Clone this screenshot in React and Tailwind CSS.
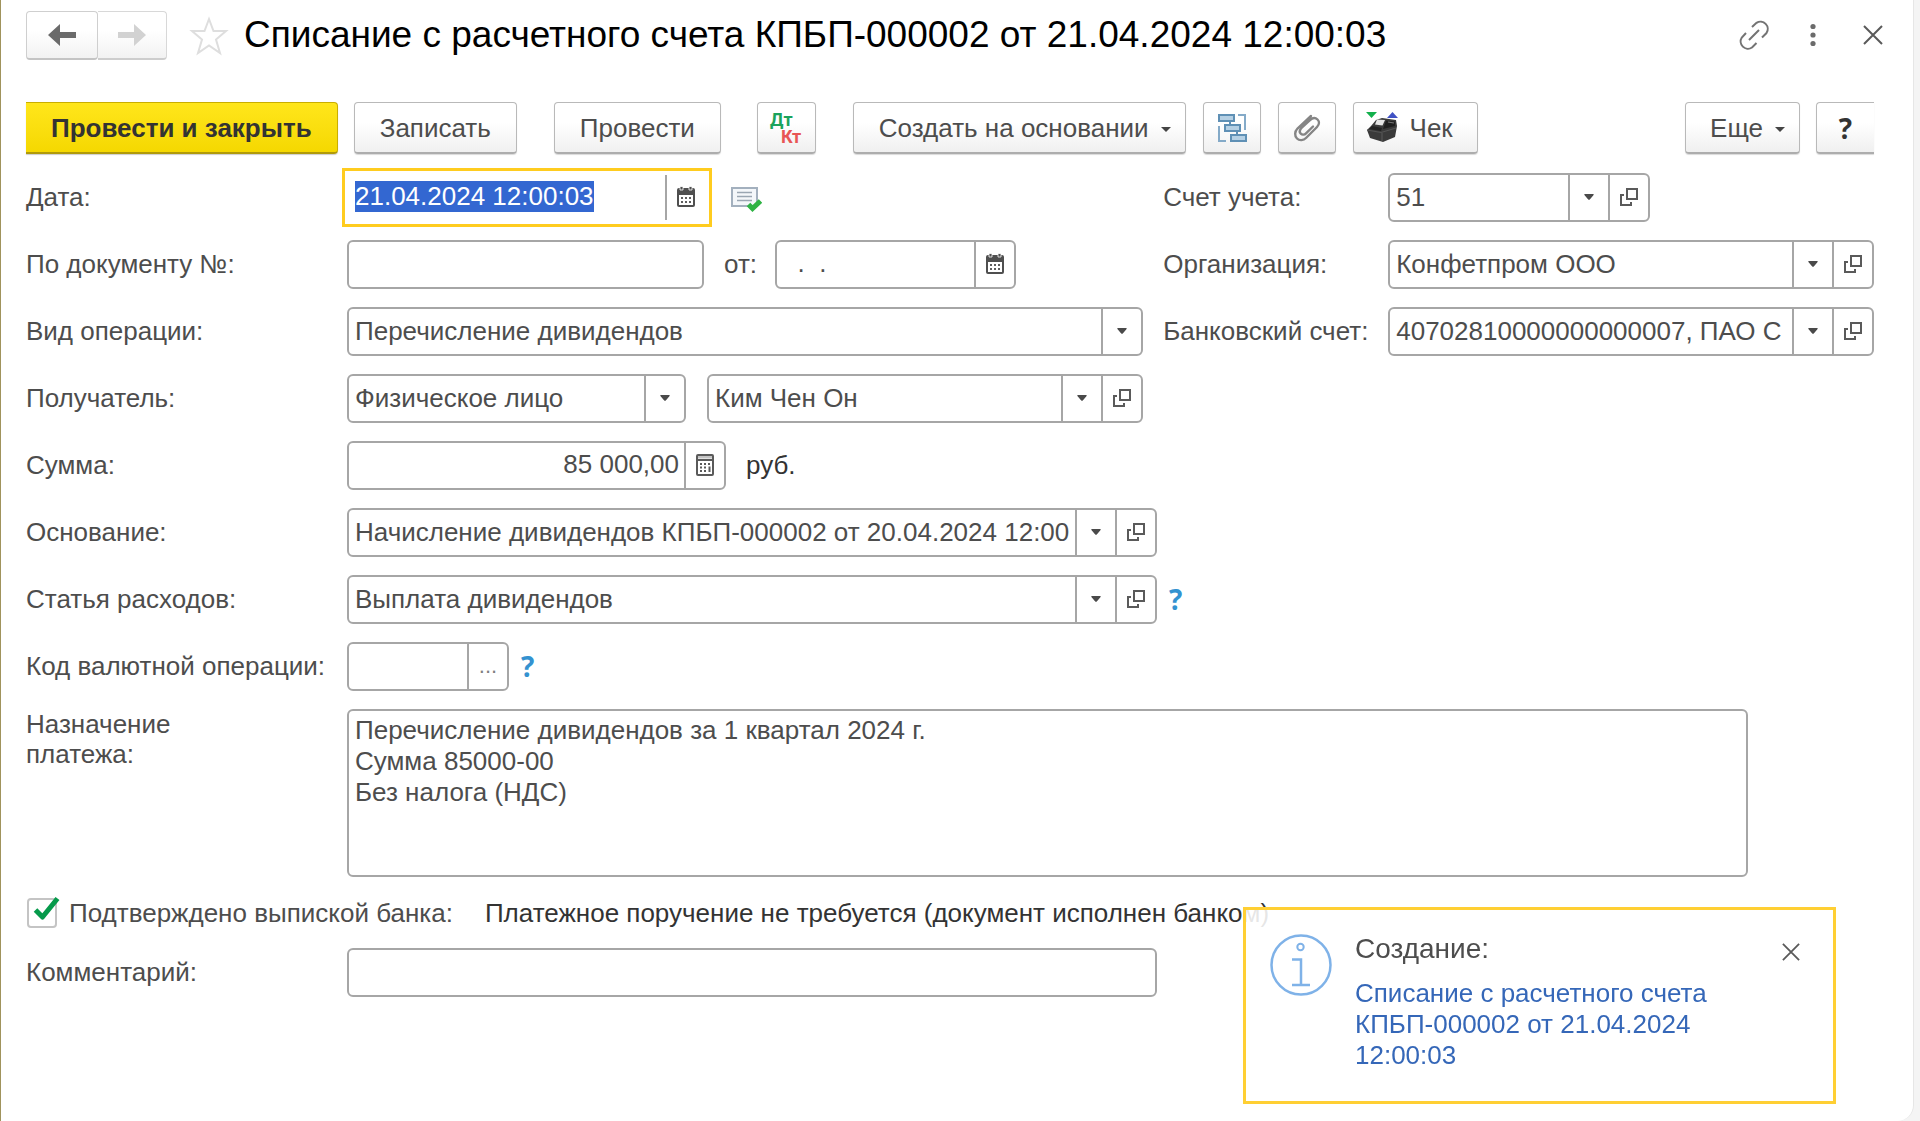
import { useEffect, useRef, useState } from 'react'

const buttonClass = "h-[52px] shrink-0 flex items-center justify-center rounded-[4px] border border-[#b9b9b9] border-b-2 border-b-[#adadad] bg-linear-to-b from-white from-40% to-[#f0f0f0] text-[#4d4d4d] shadow-[0_1px_1px_rgba(0,0,0,0.15)]"
const fieldClass = "relative flex h-[49px] rounded-[6px] border-2 border-[#a6a6a6] bg-white overflow-hidden"
const inputClass = "min-w-0 flex-1 h-full pl-[6px] pr-[5px] pb-[2px] bg-transparent outline-none appearance-none"
const sideClass = "w-10 h-full shrink-0 flex items-center justify-center pb-[2px] border-l-2 border-[#a6a6a6]"
const labelClass = "w-[321px] shrink-0 pb-[2px] whitespace-nowrap"

function Caret() {
  return (
    <svg width="10" height="6" viewBox="0 0 10 6" aria-hidden="true">
      <path d="M0.6 0H9.4Q10 0.6 9.4 1.2L5.8 5.5Q5 6.2 4.2 5.5L0.6 1.2Q0 0.6 0.6 0Z" fill="#4a4a4a" />
    </svg>
  )
}

function MenuCaret() {
  return (
    <svg className="mt-1" width="10" height="5" viewBox="0 0 10 5" aria-hidden="true">
      <path d="M0 0H10L5 5Z" fill="#444" />
    </svg>
  )
}

function OpenIcon() {
  return (
    <svg width="20" height="20" viewBox="0 0 20 20" fill="none" stroke="#5a5a5a" strokeWidth="2" aria-hidden="true">
      <rect x="8" y="2" width="10" height="10" />
      <path d="M5 8H2V18H12V15" />
    </svg>
  )
}

function CalendarIcon() {
  return (
    <svg width="20" height="22" viewBox="0 0 20 22" aria-hidden="true">
      <path d="M1 4Q1 2 3 2H17Q19 2 19 4V19Q19 21 17 21H3Q1 21 1 19Z" fill="#4f4f4f" />
      <rect x="3" y="9" width="14" height="10" fill="#fff" />
      <path d="M4 0.5H7V4H4ZM13 0.5H16V4H13Z" fill="#4f4f4f" stroke="#fff" strokeWidth="0.8" />
      <path d="M5 12H7M9 12H11M13 12H15M5 16H7M9 16H11M13 16H15" stroke="#5f5f5f" strokeWidth="2" />
    </svg>
  )
}

function CalculatorIcon() {
  return (
    <svg width="20" height="24" viewBox="0 0 20 24" fill="none" aria-hidden="true">
      <rect x="2" y="2" width="16" height="20" rx="1" stroke="#5a5a5a" strokeWidth="2" />
      <rect x="3" y="3" width="14" height="2.5" fill="#c4c4c4" />
      <path d="M2 7H18" stroke="#5a5a5a" strokeWidth="2" />
      <path d="M5 11H7M9 11H11M13 11H15M5 14.5H7M9 14.5H11M5 18H7M9 18H11" stroke="#5a5a5a" strokeWidth="2" />
      <path d="M14.5 13.5V19" stroke="#5a5a5a" strokeWidth="2" />
    </svg>
  )
}

function CloseIcon({ size }) {
  return (
    <svg width={size} height={size} viewBox="0 0 20 20" stroke="#5a5a5a" strokeWidth="2" aria-hidden="true">
      <path d="M1 1L19 19M19 1L1 19" />
    </svg>
  )
}

function StructureIcon() {
  return (
    <svg width="30" height="30" viewBox="0 0 30 30" fill="none" stroke="#5f90b5" strokeWidth="2" aria-hidden="true">
      <path d="M13 8V12M20 18V22" />
      <rect x="2" y="2" width="15" height="6" fill="#b5d0e4" />
      <rect x="8" y="12" width="15" height="6" fill="#b5d0e4" />
      <rect x="14" y="22" width="15" height="6" fill="#b5d0e4" />
      <path d="M21 2H28V17M2 13V28H9" stroke="#84aac8" />
    </svg>
  )
}

function ClipIcon() {
  return (
    <svg width="28" height="28" viewBox="0 0 28 28" fill="none" stroke="#858585" strokeWidth="2.4" strokeLinecap="round" aria-hidden="true">
      <path d="M18 2L4.500 14.500C1.500 17.500 1.500 22 4 24.500C6.500 27 10.500 26.500 13 24L24 13C26.500 10.500 26.500 7.500 24.500 5.500C22.500 3.500 19.500 3.700 17 6L8.500 14C6.500 16 6.300 18.200 7.800 19.700C9.300 21.200 11.500 20.800 13 19.300L20 12.500" />
    </svg>
  )
}

function CashRegisterIcon() {
  return (
    <svg width="32" height="31" viewBox="0 0 32 31" aria-hidden="true">
      <path d="M0 0H11L5.500 6Z" fill="#12b04c" />
      <path d="M21 6H32L26.500 0Z" fill="#4052c4" />
      <path d="M10 8L16 6L30 8L31 14L29 25L17 30L4 26L1 18L5 14Z" fill="#3a3a3a" />
      <path d="M11 7.500L19 8L16.500 13.500L9 12.500Z" fill="#e4e4e4" />
      <path d="M1 18L15 20.500L30 16" stroke="#555" strokeWidth="1" fill="none" />
      <path d="M17 17L20 8.500L29 9.500L29 14Z" fill="#1f1f1f" />
      <path d="M6 14L16 16L15 19L3 17Z" fill="#222" />
      <path d="M16 21V29" stroke="#5a5a5a" strokeWidth="1" />
      <path d="M22 10L28 11" stroke="#777" strokeWidth="1.200" />
    </svg>
  )
}

function PostedIcon() {
  return (
    <svg width="31" height="25" viewBox="0 0 31 25" fill="none" aria-hidden="true">
      <rect x="1" y="1" width="25" height="18" fill="#f4f7fa" stroke="#a3b0be" strokeWidth="2" />
      <path d="M6 5.500H21M6 9.500H21M6 13.500H21" stroke="#9aa6b2" strokeWidth="1.600" />
      <path d="M17.500 17.500L21.500 21.500L29.500 14" stroke="#2fb344" strokeWidth="5" />
    </svg>
  )
}

function SelectField({ id, value, width, open }) {
  return (
    <div className={`${fieldClass} ${width}`}>
      <div className="relative flex min-w-0 flex-1">
        <select id={id} defaultValue={value} className={`${inputClass} mr-10`}>
          <option>{value}</option>
        </select>
        <span className={`${sideClass} absolute right-0 top-0 pointer-events-none`}><Caret /></span>
      </div>
      {open && <button type="button" aria-label="Открыть" className={sideClass}><OpenIcon /></button>}
    </div>
  )
}

function Row({ id, label, children }) {
  return (
    <div className="flex items-center h-[49px]">
      <label htmlFor={id} className={labelClass}>{label}</label>
      {children}
    </div>
  )
}

function Help() {
  return <button type="button" aria-label="Справка" className="ml-3 pb-[2px] font-['Open_Sans'] font-bold text-[28px] leading-[30px] text-[#3492d0]">?</button>
}

export default function App() {
  const dateRef = useRef(null)
  const [confirmed, setConfirmed] = useState(true)
  const [toast, setToast] = useState(true)

  useEffect(() => {
    dateRef.current.focus()
    dateRef.current.select()
  }, [])

  return (
    <div className="min-h-screen flex bg-[#f4f4f4] font-['Liberation_Sans',Arial,sans-serif] text-[26px] leading-[30px] text-[#4d4d4d]">
      <main className="flex-1 min-w-0 mr-[6px] pt-[11px] pl-[25px] pr-[39px] bg-white border-l border-l-[#a0935c] border-r border-r-[#e6e6e6] rounded-br-2xl">
        {/* Title bar */}
        <header className="flex items-center h-[49px]">
          <div className="flex h-full">
            <button type="button" aria-label="Назад" className="w-[72px] flex items-center justify-center rounded-[4px] border border-[#cfcfcf] border-b-2 border-b-[#c4c4c4] bg-linear-to-b from-white from-40% to-[#f2f2f2]">
              <svg width="28" height="22" viewBox="0 0 28 22" fill="#6b6b6b"><path d="M0 11L12 0V8H28V14H12V22Z" /></svg>
            </button>
            <button type="button" aria-label="Вперед" className="w-[69px] flex items-center justify-center rounded-r-[4px] border border-l-0 border-[#d8d8d8] border-b-2 border-b-[#cdcdcd] bg-linear-to-b from-white from-40% to-[#f2f2f2]">
              <svg width="28" height="22" viewBox="0 0 28 22" fill="#d2d2d2"><path d="M28 11L16 0V8H0V14H16V22Z" /></svg>
            </button>
          </div>
          <button type="button" aria-label="В избранное" className="ml-[22px]">
            <svg width="40" height="40" viewBox="0 0 40 40" fill="none" stroke="#dedede" strokeWidth="2"><path d="M20 3L24.500 15H37L27 23.500L31 37L20 29.500L9 37L13 23.500L3 15H15.500Z" /></svg>
          </button>
          <h1 className="ml-[15px] pb-px text-[37px] leading-[42px] text-black whitespace-nowrap">Списание с расчетного счета КПБП-000002 от 21.04.2024 12:00:03</h1>
          <div className="ml-auto -mr-[9px] pb-[2px] flex items-center">
            <button type="button" aria-label="Ссылка">
              <svg width="32" height="32" viewBox="0 0 32 32" fill="none" stroke="#737373" strokeWidth="2">
                <path d="M14 8L18.500 3.800A7.300 7.300 0 0 1 28.500 14L24 18.500M8 14L3.800 18.500A7.300 7.300 0 0 0 14 28.500L18.500 24M11 21L21 11" />
              </svg>
            </button>
            <button type="button" aria-label="Меню" className="ml-10">
              <svg width="6" height="24" viewBox="0 0 6 24" fill="#6b6b6b"><circle cx="3" cy="3.500" r="2.600" /><circle cx="3" cy="12" r="2.600" /><circle cx="3" cy="20.500" r="2.600" /></svg>
            </button>
            <button type="button" aria-label="Закрыть" className="ml-[47px]"><CloseIcon size={20} /></button>
          </div>
        </header>

        {/* Commands */}
        <div className="flex mt-[42px]">
          <button type="button" className="h-[52px] shrink-0 px-[25px] rounded-r-[4px] border border-[#c9ae00] border-l-0 border-b-2 border-b-[#b09a0a] bg-linear-to-b from-[#ffe61a] to-[#f5d800] font-bold text-[#333] shadow-[0_1px_1px_rgba(0,0,0,0.2)]">Провести и закрыть</button>
          <button type="button" className={`${buttonClass} ml-4 px-[25px]`}>Записать</button>
          <button type="button" className={`${buttonClass} ml-[37px] px-[25px]`}>Провести</button>
          <button type="button" aria-label="Дт Кт" className={`${buttonClass} ml-9 w-[59px]`}>
            <svg width="40" height="42" viewBox="0 0 40 42" fontFamily="Roboto" fontWeight="700" fontSize="18">
              <text x="4" y="19" fill="#1ba35c">Дт</text>
              <text x="15" y="36" fill="#e85555">Кт</text>
            </svg>
          </button>
          <button type="button" className={`${buttonClass} ml-[37px] pl-[25px] pr-[14px] gap-3`}>Создать на основании <MenuCaret /></button>
          <button type="button" aria-label="Структура подчиненности" className={`${buttonClass} ml-[17px] w-[58px]`}><StructureIcon /></button>
          <button type="button" aria-label="Файлы" className={`${buttonClass} ml-[17px] w-[58px]`}><ClipIcon /></button>
          <button type="button" className={`${buttonClass} ml-[17px] pl-3 pr-6 gap-3`}><CashRegisterIcon />Чек</button>
          <button type="button" className={`${buttonClass} ml-auto pl-6 pr-[14px] gap-3`}>Еще <MenuCaret /></button>
          <button type="button" aria-label="Справка" className={`${buttonClass} ml-4 w-[58px] rounded-r-none border-r-0 font-['Open_Sans'] font-bold text-[28px] text-[#333]`}>?</button>
        </div>

        <form className="mt-[19px] flex flex-col gap-[18px]" onSubmit={(e) => e.preventDefault()}>
          <div className="grid grid-cols-[8fr_5fr]">
            <div className="min-w-0 flex flex-col gap-[18px] pr-5">
              <Row id="date" label="Дата:">
                <div className="flex w-[360px] h-[49px] border-2 border-transparent outline-3 outline-offset-2 outline-[#ffcc1f]">
                  <input id="date" ref={dateRef} defaultValue="21.04.2024 12:00:03" className={`${inputClass} selection:bg-[#3367d1] selection:text-white`} />
                  <button type="button" aria-label="Выбрать дату" className={sideClass}><CalendarIcon /></button>
                </div>
                <span className="ml-6 pt-1"><PostedIcon /></span>
              </Row>
              <Row id="doc" label="По документу №:">
                <div className={`${fieldClass} w-[357px]`}><input id="doc" className={inputClass} /></div>
                <label htmlFor="docdate" className="ml-5 mr-[18px] pb-[2px]">от:</label>
                <div className={`${fieldClass} w-[241px]`}>
                  <input id="docdate" defaultValue="  .  ." className={`${inputClass} whitespace-pre`} />
                  <button type="button" aria-label="Выбрать дату" className={sideClass}><CalendarIcon /></button>
                </div>
              </Row>
              <Row id="kind" label="Вид операции:">
                <SelectField id="kind" value="Перечисление дивидендов" width="flex-1" />
              </Row>
              <Row id="payee" label="Получатель:">
                <SelectField id="payee" value="Физическое лицо" width="w-[339px]" />
                <div className="flex flex-1 ml-[21px]">
                  <SelectField id="person" value="Ким Чен Он" width="flex-1" open />
                </div>
              </Row>
            </div>

            <div className="min-w-0 flex flex-col gap-[18px]">
              <div className="flex items-center">
                <label htmlFor="account" className="w-[225px] shrink-0 pb-[2px]">Счет учета:</label>
                <SelectField id="account" value="51" width="w-[262px]" open />
              </div>
              <div className="flex items-center">
                <label htmlFor="org" className="w-[225px] shrink-0 pb-[2px]">Организация:</label>
                <SelectField id="org" value="Конфетпром ООО" width="flex-1 min-w-0" open />
              </div>
              <div className="flex items-center">
                <label htmlFor="bank" className="w-[225px] shrink-0 pb-[2px]">Банковский счет:</label>
                <SelectField id="bank" value="40702810000000000007, ПАО С" width="flex-1 min-w-0" open />
              </div>
            </div>
          </div>

          <Row id="sum" label="Сумма:">
            <div className={`${fieldClass} w-[379px]`}>
              <input id="sum" defaultValue="85 000,00" className={`${inputClass} text-right`} />
              <button type="button" aria-label="Калькулятор" className={sideClass}><CalculatorIcon /></button>
            </div>
            <span className="ml-5 pb-[2px] text-[#333]">руб.</span>
          </Row>
          <Row id="basis" label="Основание:">
            <SelectField id="basis" value="Начисление дивидендов КПБП-000002 от 20.04.2024 12:00:00" width="w-[810px]" open />
          </Row>
          <Row id="item" label="Статья расходов:">
            <SelectField id="item" value="Выплата дивидендов" width="w-[810px]" open />
            <Help />
          </Row>
          <Row id="code" label="Код валютной операции:">
            <div className={`${fieldClass} w-[162px]`}>
              <input id="code" className={inputClass} />
              <button type="button" aria-label="Выбрать" className={`${sideClass} text-[22px] text-[#808080]`}>...</button>
            </div>
            <Help />
          </Row>

          <div className="flex items-start pr-[126px]">
            <label htmlFor="purpose" className="w-[321px] shrink-0">Назначение<br />платежа:</label>
            <textarea id="purpose" className="block flex-1 h-[168px] pt-1 px-[6px] rounded-[6px] border-2 border-[#a6a6a6] leading-[31px] outline-none resize-none"
              defaultValue={'Перечисление дивидендов за 1 квартал 2024 г.\nСумма 85000-00\nБез налога (НДС)'} />
          </div>

          <div className="flex items-center h-[35px] pl-px">
            <label className="flex items-center gap-3 whitespace-nowrap">
              <span className="relative flex">
                <input type="checkbox" checked={confirmed} onChange={(e) => setConfirmed(e.target.checked)} className="appearance-none size-[30px] rounded-[4px] border-2 border-[#c4c4c4] bg-white" />
                {confirmed && (
                  <svg className="absolute left-[6px] -top-[2px] pointer-events-none" width="27" height="26" viewBox="0 0 27 26" fill="none" stroke="#069a4b" strokeWidth="5">
                    <path d="M2.500 14L9.500 21L24.500 2.500" strokeLinejoin="round" />
                  </svg>
                )}
              </span>
              Подтверждено выпиской банка:
            </label>
            <span className="ml-8 text-[#333] whitespace-nowrap">Платежное поручение не требуется (документ исполнен банком)</span>
          </div>

          <Row id="comment" label="Комментарий:">
            <div className={`${fieldClass} w-[810px]`}><input id="comment" className={inputClass} /></div>
          </Row>
        </form>
      </main>

      {/* Notification */}
      {toast && (
        <aside className="fixed right-[84px] bottom-[17px] w-[593px] h-[197px] flex items-start pt-[22px] pl-[24px] pr-[33px] border-3 border-[#ffcf33] bg-white/88">
          <svg width="62" height="64" viewBox="0 -2 62 64" fill="none" stroke="#7fb2e8" strokeWidth="2.500" aria-hidden="true">
            <circle cx="31" cy="31" r="29.500" />
            <circle cx="30.500" cy="13" r="3.200" strokeWidth="2" />
            <path d="M22 25.500H31V51M22 51H40" strokeWidth="2.500" />
          </svg>
          <div className="ml-[23px] flex-1">
            <p className="text-[28px] leading-[34px]">Создание:</p>
            <a href="#doc" className="block mt-3 w-[380px] leading-[31px] text-[#3567b8]">Списание с расчетного счета КПБП-000002 от 21.04.2024 12:00:03</a>
          </div>
          <button type="button" aria-label="Закрыть" onClick={() => setToast(false)} className="mt-[11px]"><CloseIcon size={18} /></button>
        </aside>
      )}
    </div>
  )
}
